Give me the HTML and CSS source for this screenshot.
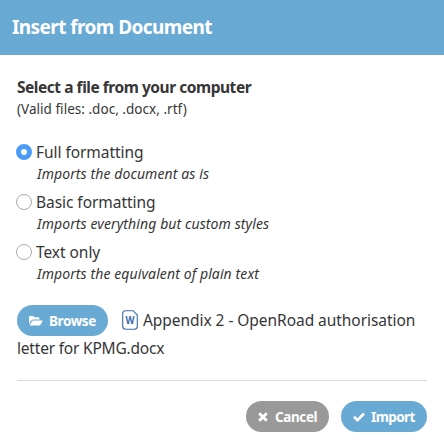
FILE: index.html
```html
<!DOCTYPE html>
<html lang="en">
<head>
<meta charset="utf-8">
<title>Insert from Document</title>
<link rel="stylesheet" href="styles.css">
</head>
<body>
<header class="header"><h1 class="title">Insert from Document</h1></header>
<main class="content">
  <h2 class="heading">Select a file from your computer</h2>
  <p class="hint">(Valid files: .doc, .docx, .rtf)</p>
  <div class="options">
    <label class="option"><input class="radio" type="radio" name="format" checked><span class="name">Full formatting</span><em class="desc">Imports the document as is</em></label>
    <label class="option"><input class="radio" type="radio" name="format"><span class="name">Basic formatting</span><em class="desc">Imports everything but custom styles</em></label>
    <label class="option"><input class="radio" type="radio" name="format"><span class="name">Text only</span><em class="desc">Imports the equivalent of plain text</em></label>
  </div>
  <div class="file">
    <div class="file-row"><button class="button browse"><svg width="14" height="12" viewBox="0 0 14 12"><path fill="#fff" d="M0 9V2.3Q0 1 1.3 1H4Q5.2 1 5.2 2.3H9.2Q10.5 2.3 10.5 3.6V4.5H4.3Q3 4.5 2.2 5.5ZM.5 10.5 3 6.3Q3.4 5.5 4.4 5.5H13Q14 5.5 13.5 6.4L11.5 9.8Q11 10.5 10.2 10.5Z"/></svg><span>Browse</span></button><svg class="doc" width="16" height="20" viewBox="0 0 16 20"><path fill="#fff" stroke="#3c6ba8" stroke-width="1.1" d="M3.5.7H11L15.3 5V16.3Q15.3 19.3 12.3 19.3H3.7Q.7 19.3.7 16.3V3.5Q.7.7 3.5.7Z"/><text class="doc-letter" x="8" y="14" text-anchor="middle" textLength="9" lengthAdjust="spacingAndGlyphs">W</text></svg><span class="filename">Appendix 2 - OpenRoad authorisation</span></div>
    <div class="filename rest">letter for KPMG.docx</div>
  </div>
  <footer class="footer">
    <button class="button cancel"><svg width="10" height="10" viewBox="0 0 10 10"><path stroke="#fff" stroke-width="2.8" d="M1.2 1.2 8.8 8.8M8.8 1.2 1.2 8.8"/></svg><span>Cancel</span></button>
    <button class="button import"><svg width="12" height="10" viewBox="0 0 12 10"><path fill="none" stroke="#fff" stroke-width="2.6" d="M1 4.8 4.5 8.2 11 1.5"/></svg><span>Import</span></button>
  </footer>
</main>
</body>
</html>
```
FILE: styles.css
```css
* { box-sizing: border-box; }
body { margin: 0; background: #fff; color: #363636; font-family: "Noto Sans", sans-serif; white-space: nowrap; }
h1, h2, p { margin: 0; }
.header { height: 55px; padding-left: 12px; background: #69aad4; color: #fff; }
.title { font-size: 19px; line-height: 54px; font-weight: 700; letter-spacing: -.58px; }
.content { padding: 20px 17px 0; }
.heading { font-size: 15.5px; line-height: 24px; font-weight: 700; letter-spacing: -.46px; }
.hint { font-size: 13.5px; line-height: 20px; letter-spacing: .03px; }
.options { margin-top: 22px; }
.option { display: grid; grid-template-columns: 19px 1fr; grid-template-rows: 22px 22px; height: 50px; }
.radio { appearance: none; width: 16px; height: 16px; margin: 3px 0 0 -1px; border: 1px solid #aaa; border-radius: 50%; background: #fff; }
.radio:checked { border: 5px solid #499bf8; }
.name { font-size: 15.5px; line-height: 22px; letter-spacing: -.05px; }
.desc { grid-column: 2; padding-left: 1px; font-size: 14px; line-height: 22px; letter-spacing: .1px; }
.file { margin-top: 14px; height: 59px; }
.file-row { display: flex; align-items: center; height: 31px; }
.filename { font-size: 15.5px; line-height: 24px; letter-spacing: -.05px; }
.file-row .filename { margin-top: -2px; }
.rest { letter-spacing: -.2px; }
.button { display: flex; align-items: center; height: 31px; padding: 0 0 0 12px; border: 0; border-radius: 16px; background: #69aad4; color: #fff; font: 700 13.5px/30px "Noto Sans", sans-serif; letter-spacing: -.4px; }
.browse { width: 91px; gap: 6px; }
.doc { margin: -2px 5px 0 14px; }
.doc-letter { font: 700 10px "Noto Sans", sans-serif; fill: #3c6ba8; }
.footer { display: flex; justify-content: flex-end; gap: 12px; margin-top: 16px; padding-top: 20px; border-top: 1px solid #d9d9d9; }
.cancel { width: 83px; gap: 7px; background: #999; }
.import { width: 86px; gap: 6px; letter-spacing: -.6px; }
```
